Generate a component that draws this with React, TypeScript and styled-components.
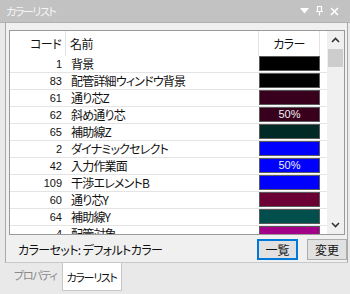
import React from "react";
import styled, {createGlobalStyle} from "styled-components";

const GlobalStyle = createGlobalStyle`
  body {
    margin: 0;
    background: #e9e9e9;
    font-family: "Noto Sans CJK JP", "Noto Sans", sans-serif;
    font-feature-settings: "palt";
  }
`

const Frame = styled.div`
  width: 350px;
  height: 294px;
  display: flex;
  flex-direction: column;
  background: #e9e9e9;
  overflow: hidden;
`

const TitleBar = styled.div`
  height: 22px;
  flex-shrink: 0;
  display: flex;
  align-items: center;
  padding: 0 11px 0 6px;
  background: #c2c2c2;
  color: #f6f6f6;
  font-size: 11px;
  border-bottom: 1px solid #b0b0b0;
`

const TitleText = styled.span`
  flex-grow: 1;
  letter-spacing: -1.4px;
`

const TitleButtons = styled.div`
  display: flex;
  align-items: center;
  gap: 7px;
`

const Panel = styled.div`
  height: 239px;
  margin: 0 2px 0 5px;
  border-left: 1px solid #a9a9a9;
  border-right: 1px solid #a9a9a9;
  border-bottom: 1px solid #c8c8c8;
  background: #f0f0f0;
  display: flex;
  flex-direction: column;
`

const ListBox = styled.div`
  margin: 7px 0 0 3px;
  width: 334px;
  height: 204px;
  border: 1px solid #9a9a9a;
  background: #ffffff;
  display: flex;
  overflow: hidden;
`

const Table = styled.div`
  width: 317px;
  display: flex;
  flex-direction: column;
`

const Header = styled.div`
  height: 25px;
  flex-shrink: 0;
  display: grid;
  grid-template-columns: 56px 193px 61px 7px;
  font-size: 12px;
  color: #111;
`

const HeadCell = styled.div<{ $align: string; $line?: boolean }>`
  display: flex;
  align-items: center;
  justify-content: ${p => p.$align};
  padding: 0 4px;
  letter-spacing: -0.6px;
  border-right: ${p => (p.$line ? "1px solid #e3e3e3" : "none")};
`

const Row = styled.div`
  height: 17px;
  flex-shrink: 0;
  display: grid;
  grid-template-columns: 56px 193px 61px 7px;
  box-sizing: border-box;
  border-bottom: 1px solid #e4e4e4;
  font-size: 12px;
  color: #111;
  line-height: 16px;
`

const Code = styled.div`
  text-align: right;
  padding-right: 4px;
  font-family: "Liberation Sans", sans-serif;
  font-size: 11px;
`

const Name = styled.div`
  padding-left: 5px;
  white-space: nowrap;
  overflow: hidden;
  letter-spacing: -0.8px;
`

const Swatch = styled.div<{ $color: string }>`
  margin: 0 0 1px 0;
  background: ${p => p.$color};
  border: 1px solid #5a5a5a;
  box-sizing: border-box;
  color: #f0f0f0;
  font-size: 11px;
  line-height: 13px;
  text-align: center;
  font-family: "Liberation Sans", sans-serif;
`

const ScrollBar = styled.div`
  width: 17px;
  background: #f0f0f0;
  display: flex;
  flex-direction: column;
  align-items: center;
`

const ArrowBox = styled.div`
  height: 18px;
  width: 17px;
  display: flex;
  align-items: center;
  justify-content: center;
`

const Thumb = styled.div`
  width: 15px;
  height: 18px;
  background: #cdcdcd;
`

const Track = styled.div`
  flex-grow: 1;
`

const Footer = styled.div`
  height: 25px;
  display: flex;
  align-items: center;
  padding: 0 0 0 12px;
  font-size: 12px;
  color: #111;
  margin-top: 2px;
`

const SetLabel = styled.span`
  flex-grow: 1;
  letter-spacing: -0.6px;
`

const Button = styled.button<{ $focus?: boolean }>`
  box-sizing: border-box;
  height: 21px;
  width: ${p => (p.$focus ? "41px" : "40px")};
  margin-left: ${p => (p.$focus ? "0" : "9px")};
  padding: 0;
  background: #e1e1e1;
  border: ${p => (p.$focus ? "2px solid #0078d7" : "1px solid #adadad")};
  font-family: "Noto Sans CJK JP", sans-serif;
  font-size: 12px;
  color: #111;
`

const TabStrip = styled.div`
  height: 30px;
  display: flex;
  align-items: flex-start;
  padding-left: 9px;
`

const Tab = styled.div<{ $active?: boolean }>`
  height: ${p => (p.$active ? "27px" : "24px")};
  display: flex;
  align-items: center;
  padding: 0 4px;
  font-size: 11px;
  letter-spacing: -1.3px;
  color: ${p => (p.$active ? "#111" : "#8a8a8a")};
  background: ${p => (p.$active ? "#ffffff" : "transparent")};
  border: ${p => (p.$active ? "1px solid #c8c8c8" : "1px solid transparent")};
  border-top: none;
`

type Item = { code: number; name: string; color: string; label?: string };

const items: Item[] = [
  {code: 1, name: "背景", color: "#000000"},
  {code: 83, name: "配管詳細ウィンドウ背景", color: "#000000"},
  {code: 61, name: "通り芯Z", color: "#38001c"},
  {code: 62, name: "斜め通り芯", color: "#38001c", label: "50%"},
  {code: 65, name: "補助線Z", color: "#002a26"},
  {code: 2, name: "ダイナミックセレクト", color: "#0000ff"},
  {code: 42, name: "入力作業面", color: "#0000ff", label: "50%"},
  {code: 109, name: "干渉エレメントB", color: "#0000ff"},
  {code: 60, name: "通り芯Y", color: "#6a0034"},
  {code: 64, name: "補助線Y", color: "#004f4c"},
  {code: 4, name: "配管対象", color: "#a3008a"},
];

export default function App() {
  return (
    <Frame>
      <GlobalStyle/>
      <TitleBar>
        <TitleText>カラーリスト</TitleText>
        <TitleButtons>
          <svg width="9" height="6" viewBox="0 0 9 6"><path d="M0 0h9L4.5 5.5z" fill="#fff"/></svg>
          <svg width="7" height="10" viewBox="0 0 7 10">
            <path d="M1.5 0.5h4v5h-4z M0 5.5h7 M3.5 5.5v4" stroke="#fff" fill="none" strokeWidth="1.2"/>
          </svg>
          <svg width="9" height="9" viewBox="0 0 9 9">
            <path d="M1 1l7 7M8 1l-7 7" stroke="#fff" strokeWidth="1.6"/>
          </svg>
        </TitleButtons>
      </TitleBar>
      <Panel>
        <ListBox>
          <Table>
            <Header>
              <HeadCell $align="flex-end" $line>コード</HeadCell>
              <HeadCell $align="flex-start" $line>名前</HeadCell>
              <HeadCell $align="center" $line>カラー</HeadCell>
              <div/>
            </Header>
            {items.map(item => (
              <Row key={item.code}>
                <Code>{item.code}</Code>
                <Name>{item.name}</Name>
                <Swatch $color={item.color}>{item.label}</Swatch>
                <div/>
              </Row>
            ))}
          </Table>
          <ScrollBar>
            <ArrowBox>
              <svg width="9" height="6" viewBox="0 0 9 6"><path d="M1 5l3.5-3.5L8 5" stroke="#333" strokeWidth="1.6" fill="none"/></svg>
            </ArrowBox>
            <Thumb/>
            <Track/>
            <ArrowBox>
              <svg width="9" height="6" viewBox="0 0 9 6"><path d="M1 1l3.5 3.5L8 1" stroke="#333" strokeWidth="1.6" fill="none"/></svg>
            </ArrowBox>
          </ScrollBar>
        </ListBox>
        <Footer>
          <SetLabel>カラーセット: デフォルトカラー</SetLabel>
          <Button $focus>一覧</Button>
          <Button>変更</Button>
        </Footer>
      </Panel>
      <TabStrip>
        <Tab>プロパティ</Tab>
        <Tab $active>カラーリスト</Tab>
      </TabStrip>
    </Frame>
  );
}
